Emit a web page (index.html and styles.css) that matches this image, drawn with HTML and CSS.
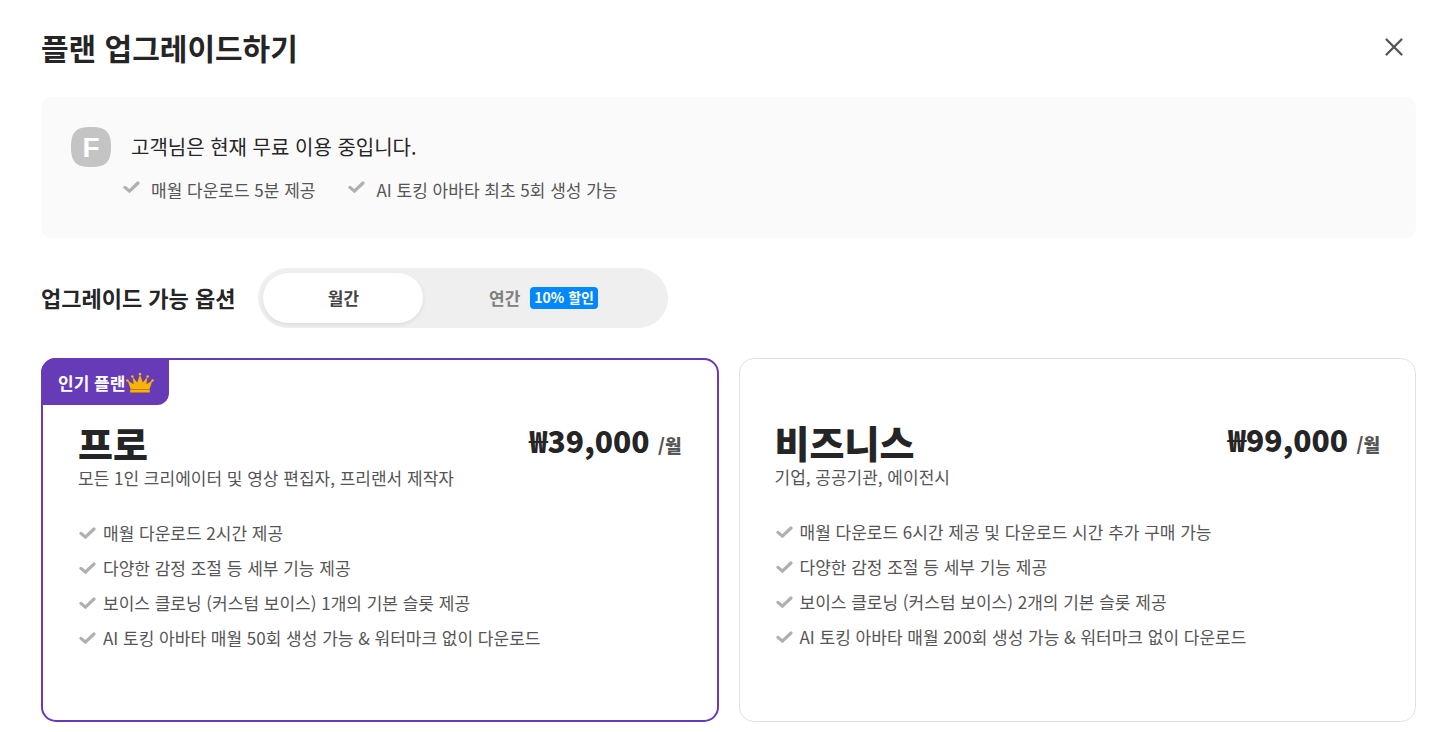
FILE: index.html
```html
<!DOCTYPE html>
<html lang="ko">
<head>
    <meta charset="UTF-8">
    <meta name="viewport" content="width=device-width, initial-scale=1.0">
    <title>플랜 업그레이드하기</title>

    <link rel="stylesheet" href="styles.css">

</head>
<body>

    <!-- 공통 체크 아이콘 -->
    <svg class="sprite" width="0" height="0">
        <symbol id="check" viewBox="0 0 18 18">
            <path d="M3 9.4 L7.4 13.2 L16 5" fill="none" stroke="#b0b0b0" stroke-width="3.2" stroke-linecap="round"/>
        </symbol>
    </svg>

    <div class="upgrade">

        <header class="header">
            <h1 class="title">플랜 업그레이드하기</h1>
            <button type="button" class="close" aria-label="닫기">
                <svg width="20" height="20" viewBox="0 0 20 20">
                    <path d="M2.5 2.5 L17.5 17.5 M17.5 2.5 L2.5 17.5" stroke="#555" stroke-width="2.3" stroke-linecap="round"/>
                </svg>
            </button>
        </header>

        <section class="current">
            <div class="current-top">
                <svg class="badge" width="40" height="40" viewBox="0 0 40 40">
                    <path d="M20 0 C35 0 40 5 40 20 C40 35 35 40 20 40 C5 40 0 35 0 20 C0 5 5 0 20 0 Z" fill="#c4c4c4"/>
                    <text class="badge-text" x="20" y="30" text-anchor="middle">F</text>
                </svg>
                <p class="current-text">고객님은 현재 무료 이용 중입니다.</p>
            </div>
            <ul class="current-list">
                <li><svg class="check"><use href="#check"/></svg>매월 다운로드 5분 제공</li>
                <li><svg class="check"><use href="#check"/></svg>AI 토킹 아바타 최초 5회 생성 가능</li>
            </ul>
        </section>

        <div class="option">
            <h2 class="option-title">업그레이드 가능 옵션</h2>
            <div class="toggle">
                <button type="button" class="toggle-btn active">월간</button>
                <button type="button" class="toggle-btn year">연간 <span class="sale">10% 할인</span></button>
            </div>
        </div>

        <div class="plans">

            <section class="plan popular">
                <div class="ribbon">
                    인기 플랜
                    <svg width="28" height="22" viewBox="0 0 28 22">
                        <path d="M4.6 17 L1.6 8.5 L7.7 12.2 L6.5 4.8 L11.2 10.5 L14 2.5 L16.8 10.5 L21.5 4.8 L20.3 12.2 L26.4 8.5 L23.6 17 Z" fill="#f8b500"/>
                        <path d="M4.2 17 H23.8 V18 H4.2 Z" fill="#b8782f"/>
                        <path d="M4.2 18 H23.8 V20 H4.2 Z" fill="#f8b500"/>
                        <path d="M4.2 20 H23.8 V21 H4.2 Z" fill="#b8782f"/>
                        <g fill="#f8b500">
                            <circle cx="14" cy="2" r="1.3"/>
                            <circle cx="6.3" cy="4.5" r="1.3"/>
                            <circle cx="21.7" cy="4.5" r="1.3"/>
                            <circle cx="1.4" cy="8.5" r="1.3"/>
                            <circle cx="26.6" cy="8.5" r="1.3"/>
                        </g>
                    </svg>
                </div>
                <div class="plan-head">
                    <h3 class="plan-name">프로</h3>
                    <p class="price">₩39,000 <span class="unit">/월</span></p>
                </div>
                <p class="desc">모든 1인 크리에이터 및 영상 편집자, 프리랜서 제작자</p>
                <ul class="plan-list">
                    <li><svg class="check"><use href="#check"/></svg>매월 다운로드 2시간 제공</li>
                    <li><svg class="check"><use href="#check"/></svg>다양한 감정 조절 등 세부 기능 제공</li>
                    <li><svg class="check"><use href="#check"/></svg>보이스 클로닝 (커스텀 보이스) 1개의 기본 슬롯 제공</li>
                    <li><svg class="check"><use href="#check"/></svg>AI 토킹 아바타 매월 50회 생성 가능 &amp; 워터마크 없이 다운로드</li>
                </ul>
            </section>

            <section class="plan">
                <div class="plan-head">
                    <h3 class="plan-name">비즈니스</h3>
                    <p class="price">₩99,000 <span class="unit">/월</span></p>
                </div>
                <p class="desc">기업, 공공기관, 에이전시</p>
                <ul class="plan-list">
                    <li><svg class="check"><use href="#check"/></svg>매월 다운로드 6시간 제공 및 다운로드 시간 추가 구매 가능</li>
                    <li><svg class="check"><use href="#check"/></svg>다양한 감정 조절 등 세부 기능 제공</li>
                    <li><svg class="check"><use href="#check"/></svg>보이스 클로닝 (커스텀 보이스) 2개의 기본 슬롯 제공</li>
                    <li><svg class="check"><use href="#check"/></svg>AI 토킹 아바타 매월 200회 생성 가능 &amp; 워터마크 없이 다운로드</li>
                </ul>
            </section>

        </div>

    </div>

</body>
</html>
```
FILE: styles.css
```css
* {
    box-sizing: border-box;
    margin: 0;
    padding: 0;
}

body {
    background-color: white;
    color: #252525;
    font-family: "Noto Sans CJK KR", sans-serif;
}

ul {
    list-style: none;
}

button {
    border: 0;
    background: none;
    font-family: inherit;
    cursor: pointer;
}

svg {
    display: block;
    flex-shrink: 0;
}

.sprite {
    position: absolute;
}

.upgrade {
    padding: 25px 22px 10px 41px;
}

/* 상단 제목 */
.header {
    display: flex;
    justify-content: space-between;
    align-items: center;
    margin-bottom: 28px;
}

.title {
    font-size: 30px;
    line-height: 44px;
    font-weight: 700;
}

.close {
    padding: 12px;
}

/* 현재 이용 중인 플랜 */
.current {
    padding: 30px 30px 34px;
    border-radius: 10px;
    background-color: #fafafa;
}

.current-top {
    display: flex;
    align-items: center;
    gap: 20px;
}

.badge-text {
    fill: white;
    font-family: "Liberation Sans", sans-serif;
    font-size: 28px;
    font-weight: 700;
}

.current-text {
    font-size: 20px;
    line-height: 30px;
}

.current-list {
    display: flex;
    gap: 32px;
    margin-top: 9px;
    padding-left: 51px;
    color: #555;
    font-size: 17px;
    line-height: 28px;
}

.current-list li {
    display: flex;
    gap: 11px;
}

.current-list .check {
    margin-top: 2px;
}

.check {
    width: 18px;
    height: 18px;
}

/* 월간, 연간 선택 */
.option {
    display: flex;
    align-items: center;
    gap: 23px;
    margin: 30px 0;
}

.option-title {
    padding-bottom: 2px;
    font-size: 22px;
    line-height: 32px;
    font-weight: 700;
}

.toggle {
    display: flex;
    padding: 5px;
    border-radius: 30px;
    background-color: #efefef;
}

.toggle-btn {
    display: flex;
    justify-content: center;
    align-items: center;
    gap: 10px;
    width: 160px;
    height: 50px;
    padding-bottom: 1px;
    border-radius: 25px;
    color: #808080;
    font-size: 17px;
    font-weight: 700;
}

.toggle-btn.active {
    background-color: white;
    box-shadow: 0 2px 4px rgba(0, 0, 0, .08);
    color: #444;
}

.toggle-btn.year {
    width: 240px;
}

.sale {
    padding: 0 4px 2px;
    border-radius: 4px;
    background-color: #0088ff;
    color: white;
    font-size: 14px;
    line-height: 20px;
    font-weight: 700;
}

/* 플랜 카드 */
.plans {
    display: grid;
    grid-template-columns: 1fr 1fr;
    gap: 20px;
}

.plan {
    position: relative;
    padding: 62px 35px 68px;
    border: 1px solid #e2e2e2;
    border-radius: 15px;
}

.popular {
    border: 2px solid #673ab7;
}

/* 카드 모서리 위에 겹치는 라벨 */
.ribbon {
    position: absolute;
    top: -2px;
    left: -2px;
    display: flex;
    align-items: center;
    gap: 1px;
    height: 47px;
    padding: 2px 15px 0 17px;
    border-radius: 15px 0 12px 0;
    background-color: #673ab7;
    color: white;
    font-size: 17px;
    font-weight: 700;
}

.plan-head {
    display: flex;
    justify-content: space-between;
    align-items: flex-start;
}

.plan-name {
    font-size: 38px;
    line-height: 42px;
    font-weight: 900;
}

.price {
    font-size: 30px;
    line-height: 36px;
    font-weight: 900;
}

.unit {
    color: #555;
    font-size: 18px;
    line-height: 20px;
}

.desc {
    margin-bottom: 27px;
    color: #555;
    font-size: 17px;
    line-height: 28px;
}

.plan-list {
    display: grid;
    gap: 7px;
    color: #555;
    font-size: 17px;
    line-height: 28px;
}

.plan-list li {
    display: flex;
    align-items: center;
    gap: 7px;
}
```
